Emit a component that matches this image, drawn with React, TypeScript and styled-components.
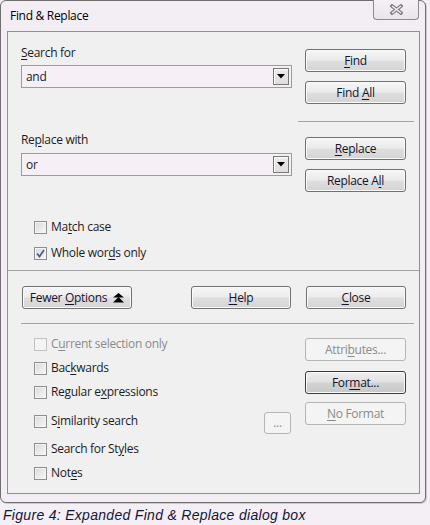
import React from 'react';
import styled, { createGlobalStyle, css } from 'styled-components';

const Global = createGlobalStyle`
  html, body { margin: 0; padding: 0; background: #f4eff4; }
  body {
    width: 430px; height: 525px; overflow: hidden;
    font-family: "Open Sans", "Noto Sans", sans-serif;
    font-size: 12px; color: #1c1c1c;
    letter-spacing: -0.3px;
  }
`;

const Page = styled.div`
  display: flex;
  flex-direction: column;
  width: 430px;
  height: 525px;
`;

const Window = styled.div`
  box-sizing: border-box;
  width: 426px;
  height: 503px;
  border: 1px solid #6e6e6e;
  border-radius: 6px;
  background: #f3eef3;
  display: flex;
  flex-direction: column;
  padding: 0 5px 8px 6px;
  box-shadow: 1px 1px 0 #cfc9cf;
`;

const TitleBar = styled.div`
  height: 30px;
  display: flex;
  justify-content: space-between;
  align-items: flex-start;
`;

const Title = styled.div`
  padding: 7px 0 0 3px;
  line-height: 16px;
  color: #000;
`;

const CloseBtn = styled.div`
  box-sizing: border-box;
  width: 46px;
  height: 20px;
  margin: -1px 1px 0 0;
  border: 1px solid #8c8c8c;
  border-top: none;
  border-radius: 0 0 4px 4px;
  background: linear-gradient(#f5f0f5, #ebe5eb);
  display: flex;
  align-items: center;
  justify-content: center;
`;

const Panel = styled.div`
  flex: 1;
  border: 1px solid #8f8f8f;
  background: #f0f0f0;
  display: flex;
  flex-direction: column;
`;

const Row = styled.div`
  display: flex;
  justify-content: space-between;
  padding: 0 13px 0 13px;
`;

const LeftCol = styled.div<{ $top: number; $gap: number }>`
  width: 271px;
  display: flex;
  flex-direction: column;
  padding-top: ${p => p.$top}px;
  gap: ${p => p.$gap}px;
`;

const RightCol = styled.div<{ $top: number }>`
  width: 101px;
  display: flex;
  flex-direction: column;
  gap: 9px;
  padding-top: ${p => p.$top}px;
`;

const Label = styled.div`
  line-height: 16px;
  height: 16px;
  white-space: nowrap;
`;

const Combo = styled.div`
  box-sizing: border-box;
  height: 23px;
  border: 1px solid #9c9c9c;
  background: #f6eff6;
  display: flex;
  align-items: center;
  justify-content: space-between;
  padding: 0 2px 0 4px;
  line-height: 16px;
`;

const DropBtn = styled.div`
  box-sizing: border-box;
  width: 16px;
  height: 17px;
  border: 1px solid #787878;
  background: linear-gradient(#ececec, #dedede);
  box-shadow: inset 1px 1px 0 #ffffff;
  display: flex;
  align-items: center;
  justify-content: center;
`;

const Button = styled.div<{ $w?: number; $h?: number; $gap?: number; $disabled?: boolean; $default?: boolean }>`
  box-sizing: border-box;
  width: ${p => p.$w ?? 101}px;
  height: ${p => p.$h ?? 23}px;
  border: 1px solid #707070;
  border-radius: 3px;
  background: linear-gradient(#f6f6f6 0%, #ececec 45%, #dedede 55%, #d4d4d4 100%);
  box-shadow: inset 0 0 0 1px #fafafa;
  display: flex;
  align-items: center;
  justify-content: center;
  gap: ${p => p.$gap ?? 6}px;
  color: #14142e;
  line-height: 16px;
  white-space: nowrap;
  ${p => p.$default && css`
    border-color: #3c3c3c;
    background: linear-gradient(#eeeeee 0%, #e2e2e2 45%, #d2d2d2 55%, #c8c8c8 100%);
  `}
  ${p => p.$disabled && css`
    border-color: #b5b5b5;
    background: #f4f4f4;
    box-shadow: none;
    color: #8b8b8b;
  `}
`;

const RightSep = styled.div`
  align-self: flex-end;
  width: 116px;
  height: 0;
  border-top: 1px solid #a3a3a3;
  margin: 17px 5px 0 0;
`;

const FullSep = styled.div<{ $top: number; $left?: number; $right?: number }>`
  height: 0;
  border-top: 1px solid #a3a3a3;
  margin: ${p => p.$top}px ${p => p.$right ?? 0}px 0 ${p => p.$left ?? 0}px;
`;

const CheckRow = styled.div<{ $top: number; $disabled?: boolean }>`
  display: flex;
  align-items: center;
  gap: 4px;
  height: 16px;
  line-height: 16px;
  margin-top: ${p => p.$top}px;
  padding-left: 26px;
  white-space: nowrap;
  color: ${p => (p.$disabled ? '#8b8b8b' : '#1c1c1c')};
`;

const Box = styled.span<{ $disabled?: boolean }>`
  box-sizing: border-box;
  width: 13px;
  height: 13px;
  flex: none;
  border: 1px solid #8e8f8f;
  background: linear-gradient(135deg, #d9d9d9, #f8f8f8);
  box-shadow: inset 0 0 0 1px #f4f4f4;
  display: flex;
  align-items: center;
  justify-content: center;
  ${p => p.$disabled && css`
    border-color: #c2c2c2;
    background: #f4f4f4;
    box-shadow: none;
  `}
`;

const ButtonRow = styled.div`
  display: flex;
  align-items: center;
  padding: 0 13px 0 14px;
  margin-top: 15px;
`;

const RightGroup = styled.div`
  margin-left: auto;
  display: flex;
  gap: 15px;
`;

const Options = styled.div`
  display: flex;
  padding-right: 13px;
`;

const OptList = styled.div`
  flex: 1;
  display: flex;
  flex-direction: column;
`;

const DotsCell = styled.div`
  padding-top: 88px;
  margin-right: 14px;
`;

const OptButtons = styled.div`
  width: 101px;
  display: flex;
  flex-direction: column;
  padding-top: 14px;
`;

const Spaced = styled.div<{ $top: number }>`
  margin-top: ${p => p.$top}px;
`;

const Mn = styled.span`
  text-decoration: underline;
  text-underline-offset: 2px;
`;

const Caption = styled.div`
  font-family: "Liberation Sans", Arial, sans-serif;
  font-style: italic;
  font-size: 14px;
  letter-spacing: 0.3px;
  line-height: 17px;
  color: #141438;
  padding: 4px 0 0 3px;
  white-space: nowrap;
`;

const Arrow = () => (
  <svg width="8" height="5" viewBox="0 0 8 5">
    <polygon points="0,0 8,0 4,4.5" fill="#000" />
  </svg>
);

const CloseGlyph = () => (
  <svg width="13" height="11" viewBox="0 0 13 11">
    <path d="M2 2 L11 9 M11 2 L2 9" stroke="#7f7f7f" strokeWidth="3.6" strokeLinecap="square" fill="none" />
    <path d="M2 2 L11 9 M11 2 L2 9" stroke="#f4f0f4" strokeWidth="1.4" strokeLinecap="butt" fill="none" />
  </svg>
);

const Check = () => (
  <svg width="9" height="9" viewBox="0 0 9 9">
    <path d="M1 4.5 L3.5 7.5 L8 1" stroke="#4b5f8e" strokeWidth="1.8" fill="none" />
  </svg>
);

const DoubleUp = () => (
  <svg width="11" height="10" viewBox="0 0 11 10">
    <polygon points="5.5,0 11,4.5 0,4.5" fill="#000" />
    <polygon points="5.5,4 11,9.5 0,9.5" fill="#000" />
  </svg>
);

type CB = { top: number; checked?: boolean; disabled?: boolean; children: React.ReactNode };
const CheckItem = ({ top, checked, disabled, children }: CB) => (
  <CheckRow $top={top} $disabled={disabled}>
    <Box $disabled={disabled}>{checked && <Check />}</Box>
    <span>{children}</span>
  </CheckRow>
);

export default function App() {
  return (
    <Page>
      <Global />
      <Window>
        <TitleBar>
          <Title>Find &amp; Replace</Title>
          <CloseBtn><CloseGlyph /></CloseBtn>
        </TitleBar>
        <Panel>
          <Row>
            <LeftCol $top={13} $gap={4}>
              <Label><Mn>S</Mn>earch for</Label>
              <Combo><span>and</span><DropBtn><Arrow /></DropBtn></Combo>
            </LeftCol>
            <RightCol $top={17}>
              <Button><span><Mn>F</Mn>ind</span></Button>
              <Button><span>Find <Mn>A</Mn>ll</span></Button>
            </RightCol>
          </Row>
          <RightSep />
          <Row>
            <LeftCol $top={10} $gap={5}>
              <Label>Re<Mn>p</Mn>lace with</Label>
              <Combo><span>or</span><DropBtn><Arrow /></DropBtn></Combo>
            </LeftCol>
            <RightCol $top={15}>
              <Button><span><Mn>R</Mn>eplace</span></Button>
              <Button><span>Replace A<Mn>l</Mn>l</span></Button>
            </RightCol>
          </Row>
          <CheckItem top={27}>Ma<Mn>t</Mn>ch case</CheckItem>
          <CheckItem top={10} checked>Whole wor<Mn>d</Mn>s only</CheckItem>
          <FullSep $top={9} />
          <ButtonRow>
            <Button $w={110} $gap={6}><span>Fewer <Mn>O</Mn>ptions</span><DoubleUp /></Button>
            <RightGroup>
              <Button $w={100}><span><Mn>H</Mn>elp</span></Button>
              <Button $w={100}><span><Mn>C</Mn>lose</span></Button>
            </RightGroup>
          </ButtonRow>
          <FullSep $top={14} $left={13} $right={5} />
          <Options>
            <OptList>
              <CheckItem top={12} disabled>C<Mn>u</Mn>rrent selection only</CheckItem>
              <CheckItem top={8}>Bac<Mn>k</Mn>wards</CheckItem>
              <CheckItem top={8}>Regular e<Mn>x</Mn>pressions</CheckItem>
              <CheckItem top={13}>S<Mn>i</Mn>milarity search</CheckItem>
              <CheckItem top={12}>Search for St<Mn>y</Mn>les</CheckItem>
              <CheckItem top={8}>Not<Mn>e</Mn>s</CheckItem>
            </OptList>
            <DotsCell>
              <Button $w={27} $h={22} $disabled><span>...</span></Button>
            </DotsCell>
            <OptButtons>
              <Button $disabled><span>Attri<Mn>b</Mn>utes...</span></Button>
              <Spaced $top={10}>
                <Button $default><span>For<Mn>m</Mn>at...</span></Button>
              </Spaced>
              <Spaced $top={8}>
                <Button $disabled><span><Mn>N</Mn>o Format</span></Button>
              </Spaced>
            </OptButtons>
          </Options>
        </Panel>
      </Window>
      <Caption>Figure 4: Expanded Find &amp; Replace dialog box</Caption>
    </Page>
  );
}
